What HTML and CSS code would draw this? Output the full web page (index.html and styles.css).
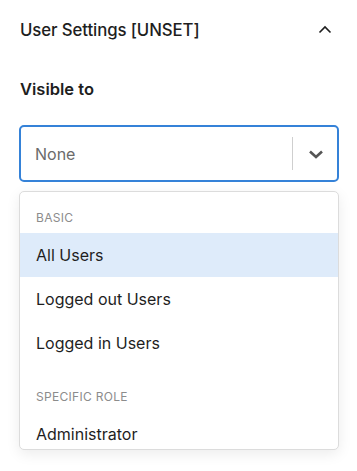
FILE: index.html
```html
<!DOCTYPE html>
<html>
<head>
<meta charset="utf-8">
<link rel="stylesheet" href="styles.css">
</head>
<body>
<div class="panel">
  <div class="panel-header">
    <span class="panel-title">User Settings [UNSET]</span>
    <svg class="toggle" width="24" height="24" viewBox="0 0 24 24"><path d="M6.5 14.5 12 9l5.5 5.5" fill="none" stroke="#1e1e1e" stroke-width="1.6"/></svg>
  </div>
  <div class="field">
    <div class="label">Visible to</div>
    <div class="select">
      <span class="placeholder">None</span>
      <span class="sep"></span>
      <svg class="caret" width="20" height="20" viewBox="0 0 20 20"><path d="M4 7.5 10 13l6-5.5" fill="none" stroke="#555" stroke-width="2.6"/></svg>
    </div>
    <div class="menu">
      <div class="menu-list">
        <div class="group">
          <div class="group-heading">Basic</div>
          <div class="option active">All Users</div>
          <div class="option">Logged out Users</div>
          <div class="option">Logged in Users</div>
        </div>
        <div class="group">
          <div class="group-heading">Specific Role</div>
          <div class="option">Administrator</div>
        </div>
      </div>
    </div>
  </div>
</div>
</body>
</html>
```
FILE: styles.css
```css
html, body {
  margin: 0;
  padding: 0;
  background: #fff;
}
body {
  font-family: Inter, "Noto Sans", "Liberation Sans", sans-serif;
  color: #1e1e1e;
  width: 357px;
  height: 471px;
  overflow: hidden;
}
.panel {
  padding: 0 18px 0 19px;
}
.panel-header {
  display: flex;
  align-items: center;
  justify-content: space-between;
  height: 60px;
  padding-left: 1px;
}
.panel-title {
  font-size: 16.8px;
  font-weight: 500;
  letter-spacing: -0.1px;
}
.toggle {
  margin-right: 2px;
}
.field {
  padding-top: 17px;
}
.label {
  font-size: 16.5px;
  font-weight: 600;
  line-height: 24px;
  padding-left: 1px;
  margin-bottom: 24px;
}
.select {
  box-sizing: border-box;
  height: 57px;
  border: 2px solid #3582d8;
  border-radius: 5px;
  display: flex;
  align-items: center;
  padding-left: 14px;
}
.placeholder {
  flex: 1;
  font-size: 16px;
  color: #6b6b6b;
}
.sep {
  width: 1px;
  height: 33px;
  background: #cfcfcf;
}
.caret {
  margin: 0 11px 0 13px;
}
.menu {
  margin-top: 9px;
  box-sizing: border-box;
  height: 259px;
  border: 1px solid #dcdcdc;
  border-radius: 5px;
  box-shadow: 0 4px 14px rgba(0, 0, 0, 0.08);
  overflow: hidden;
  background: #fff;
}
.menu-list {
  padding-top: 2px;
}
.group {
  padding: 4px 0 8px;
}
.group + .group {
  padding-top: 4px;
}
.group-heading {
  font-size: 12px;
  line-height: 15px;
  text-transform: uppercase;
  color: #8c8c8c;
  padding: 12px 16px 8px;
  letter-spacing: 0.3px;
}
.option {
  height: 44px;
  display: flex;
  align-items: center;
  padding-left: 16px;
  font-size: 16px;
  color: #1e1e1e;
}
.option.active {
  background: #deebfa;
}
```
